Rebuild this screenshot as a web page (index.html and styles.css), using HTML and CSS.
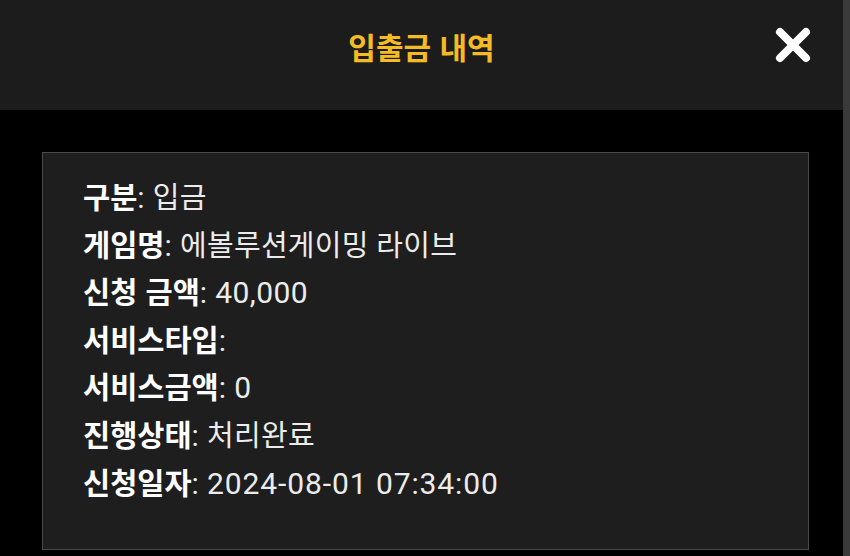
FILE: index.html
```html
<!DOCTYPE html>
<html lang="ko">
<head>
    <meta charset="UTF-8">
    <meta name="viewport" content="width=device-width, initial-scale=1.0">
    <title>입출금 내역</title>
    <link rel="stylesheet" href="styles.css">
</head>
<body>
    <div class="page">
        <div class="main">
            <header class="header">
                <h1 class="title">입출금 내역</h1>
                <button class="close-btn" type="button" aria-label="닫기">
                    <svg width="36" height="36" viewBox="0 0 36 36">
                        <path d="M5 5 L31 31 M31 5 L5 31" stroke="#fff" stroke-width="8" stroke-linecap="round" fill="none"/>
                    </svg>
                </button>
            </header>

            <div class="detail-box">
                <div class="info-item"><span class="info-label">구분</span>: <span class="info-text">입금</span></div>
                <div class="info-item"><span class="info-label">게임명</span>: <span class="info-text">에볼루션게이밍 라이브</span></div>
                <div class="info-item"><span class="info-label">신청 금액</span>: 40,000</div>
                <div class="info-item"><span class="info-label">서비스타입</span>:</div>
                <div class="info-item"><span class="info-label">서비스금액</span>: 0</div>
                <div class="info-item"><span class="info-label">진행상태</span>: <span class="info-text">처리완료</span></div>
                <div class="info-item"><span class="info-label">신청일자</span>: <span class="info-date">2024-08-01 07:34:00</span></div>
            </div>
        </div>
        <div class="scroll-strip"></div>
    </div>
</body>
</html>
```

FILE: styles.css
```css
html, body {
    margin: 0;
    padding: 0;
    height: 100%;
}
body {
    background-color: #000;
    font-family: Roboto, "Noto Sans CJK KR", sans-serif;
    color: #f0f0f0;
    overflow: hidden;
}
.page {
    display: flex;
    height: 100%;
}
.main {
    flex: 1;
}
.scroll-strip {
    width: 7px;
    background-color: #3a3a3a;
}
.header {
    position: relative;
    height: 110px;
    background-color: #1c1c1c;
    display: flex;
    justify-content: center;
    align-items: flex-start;
}
.title {
    margin: 0;
    padding-top: 25px;
    font-family: "Noto Sans CJK KR", sans-serif;
    font-size: 30px;
    font-weight: bold;
    line-height: 42px;
    color: #f4bb25;
}
.close-btn {
    position: absolute;
    top: 27px;
    right: 32px;
    padding: 0;
    border: none;
    background: none;
    cursor: pointer;
}
.close-btn svg {
    display: block;
}
.detail-box {
    margin: 42px 34px 0 42px;
    height: 398px;
    box-sizing: border-box;
    background-color: #1e1e1e;
    border: 1px solid #4a4a4a;
    padding: 19px 40px;
}
.info-item {
    height: 47.6px;
    font-size: 30px;
    letter-spacing: 0.4px;
    line-height: 47.6px;
    color: #ececec;
    white-space: nowrap;
}
.info-label {
    font-family: "Noto Sans CJK KR", sans-serif;
    font-size: 29.5px;
    letter-spacing: 0;
    font-weight: bold;
    color: #fff;
}
.info-text {
    font-size: 29px;
    letter-spacing: 0.3px;
}
.info-date {
    letter-spacing: 0.9px;
}
```
